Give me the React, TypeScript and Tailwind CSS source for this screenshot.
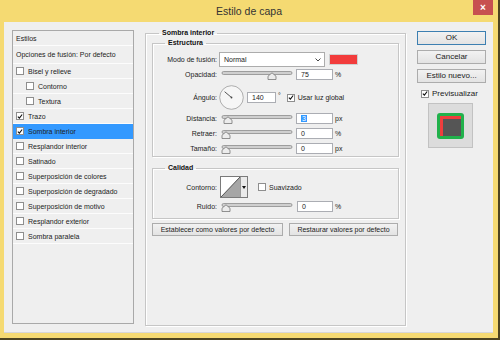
import React from 'react';

const Check = () => (
  <svg width="7" height="7" viewBox="0 0 7 7" className="block">
    <path d="M1 3.6 L2.8 5.4 L6 1.2" fill="none" stroke="#111" strokeWidth="1.3" />
  </svg>
);

const Checkbox: React.FC<{ checked?: boolean }> = ({ checked }) => (
  <span className="flex items-center justify-center w-[8px] h-[8px] shrink-0 bg-white border border-[#8e8e8e]">
    {checked && <Check />}
  </span>
);

const Slider: React.FC<{ pos: number }> = ({ pos }) => (
  <svg width="72" height="10" viewBox="0 0 72 10" className="block shrink-0">
    <rect x="1" y="1.5" width="70" height="3" rx="1.5" fill="#cfcfcf" stroke="#8c8c8c" strokeWidth="0.8" />
    <path
      d={`M${pos - 4} 9.5 L${pos - 4} 6.2 L${pos} 2.8 L${pos + 4} 6.2 L${pos + 4} 9.5 Z`}
      fill="#ececec"
      stroke="#777"
      strokeWidth="0.8"
    />
  </svg>
);

const NumInput: React.FC<{ value: string; w?: string; selected?: boolean }> = ({ value, w = 'w-[37px]', selected }) => (
  <div className={`${w} h-[11px] shrink-0 bg-white border border-[#abadb3] flex items-center pl-[4px] text-[7px] leading-none`}>
    {selected ? <span className="bg-[#3399ff] text-white px-[1px]">{value}</span> : value}
  </div>
);

const Label: React.FC<{ children: React.ReactNode }> = ({ children }) => (
  <span className="w-[64px] shrink-0 text-right text-[7px] leading-none text-[#222]">{children}</span>
);

const SliderRow: React.FC<{ label: string; pos: number; value: string; unit: string; selected?: boolean; top: string }> = ({
  label,
  pos,
  value,
  unit,
  selected,
  top,
}) => (
  <div className={`flex items-center h-[11px] ${top}`}>
    <Label>{label}</Label>
    <div className="ml-[4px]">
      <Slider pos={pos} />
    </div>
    <div className="ml-[3px]">
      <NumInput value={value} selected={selected} />
    </div>
    <span className="ml-[2px] text-[7px] leading-none">{unit}</span>
  </div>
);

const Button: React.FC<{ children: React.ReactNode; className?: string; primary?: boolean }> = ({ children, className = '', primary }) => (
  <div
    className={`flex items-center justify-center h-[13px] bg-gradient-to-b from-[#f2f2f2] to-[#e3e3e3] border ${
      primary ? 'border-[#3c7fb1]' : 'border-[#acacac]'
    } text-[#222] leading-none ${className}`}
  >
    {children}
  </div>
);

const styles = [
  { name: 'Bisel y relieve' },
  { name: 'Contorno', indent: true },
  { name: 'Textura', indent: true },
  { name: 'Trazo', checked: true },
  { name: 'Sombra interior', checked: true, active: true },
  { name: 'Resplandor interior' },
  { name: 'Satinado' },
  { name: 'Superposición de colores' },
  { name: 'Superposición de degradado' },
  { name: 'Superposición de motivo' },
  { name: 'Resplandor exterior' },
  { name: 'Sombra paralela' },
];

const Fieldset: React.FC<{ legend: string; className?: string; legendClass?: string; children: React.ReactNode }> = ({
  legend,
  className = '',
  legendClass = 'ml-[12px]',
  children,
}) => (
  <fieldset className={`border border-[#c6c6c6] shadow-[inset_1px_1px_0_#fff,1px_1px_0_#fff] ${className}`}>
    <legend className={`${legendClass} px-[3px] text-[7px] leading-[8px] font-bold text-[#111]`}>{legend}</legend>
    {children}
  </fieldset>
);

export default function App() {
  return (
    <div className="w-[500px] h-[340px] bg-[#f5da72] border-r-2 border-b-2 border-[#4d4420] flex flex-col font-['Liberation_Sans',Arial,sans-serif] text-[#222] relative">
      {/* title bar */}
      <div className="h-[22px] shrink-0 flex items-center justify-center">
        <span className="text-[10.5px] text-[#333] mt-[1px]">Estilo de capa</span>
      </div>
      <div className="absolute top-0 right-[5px] w-[20px] h-[15px] bg-[#c75050] flex items-center justify-center text-white text-[10px] font-bold leading-none">
        ×
      </div>

      {/* client */}
      <div className="ml-[4px] mr-[5px] h-[311px] bg-[#efefef] border-b border-[#d7d7d7] flex">
        {/* styles list */}
        <div className="ml-[8px] mt-[8px] w-[122px] h-[294px] border border-[#a9a9a9] bg-[#efefef] flex flex-col text-[7px] leading-none">
          <div className="h-[15px] border-b border-[#fcfcfc] flex items-center pl-[3px]">Estilos</div>
          <div className="h-[18px] border-b border-[#fcfcfc] flex items-center pl-[3px]">Opciones de fusión: Por defecto</div>
          {styles.map((s) => (
            <div
              key={s.name}
              className={`h-[15px] shrink-0 flex items-center border-b ${
                s.active ? 'bg-[#3399ff] border-[#3399ff]' : 'border-[#fcfcfc]'
              } ${s.indent ? 'pl-[13px]' : 'pl-[3px]'}`}
            >
              <Checkbox checked={s.checked} />
              <span className="ml-[4px]">{s.name}</span>
            </div>
          ))}
        </div>

        {/* settings */}
        <div className="ml-[11px] mt-[7px] w-[261px] flex flex-col">
          <Fieldset legend="Sombra interior" legendClass="ml-[7px]" className="h-[297px] px-[6px]">
            <Fieldset legend="Estructura" className="mt-[2px] pb-[2px]">
              <div className="flex items-center h-[15px] mt-[5px]">
                <Label>Modo de fusión:</Label>
                <div className="ml-[2px] w-[106px] h-[15px] bg-white border border-[#acacac] flex items-center justify-between pl-[4px] pr-[3px] text-[7px] leading-none">
                  <span>Normal</span>
                  <svg width="6" height="4" viewBox="0 0 6 4">
                    <path d="M0.5 0.5 L3 3 L5.5 0.5" fill="none" stroke="#333" strokeWidth="0.9" />
                  </svg>
                </div>
                <div className="ml-[4px] w-[29px] h-[11px] bg-[#f23c3c] border border-[#d0d0d0]" />
              </div>
              <SliderRow label="Opacidad:" pos={51} value="75" unit="%" top="mt-[2px]" />
              <div className="flex items-center h-[25px] mt-[5px]">
                <Label>Ángulo:</Label>
                <svg width="25" height="25" viewBox="0 0 25 25" className="ml-[2px] shrink-0">
                  <circle cx="12.5" cy="12.5" r="11.8" fill="#f6f6f6" stroke="#9c9c9c" strokeWidth="0.8" />
                  <line x1="12.5" y1="12.5" x2="5.6" y2="6.7" stroke="#444" strokeWidth="0.9" />
                  <circle cx="12.5" cy="12.5" r="0.9" fill="#444" />
                </svg>
                <div className="ml-[3px]">
                  <NumInput value="140" w="w-[29px]" />
                </div>
                <span className="ml-[2px] text-[7px] leading-none self-start mt-[7px]">°</span>
                <span className="ml-[6px]">
                  <Checkbox checked />
                </span>
                <span className="ml-[3px] text-[7px] leading-none">Usar luz global</span>
              </div>
              <SliderRow label="Distancia:" pos={7} value="3" unit="px" selected top="mt-[3px]" />
              <SliderRow label="Retraer:" pos={5} value="0" unit="%" top="mt-[4px]" />
              <SliderRow label="Tamaño:" pos={5} value="0" unit="px" top="mt-[4px]" />
            </Fieldset>

            <Fieldset legend="Calidad" className="mt-[7px] pb-[6px]">
              <div className="flex items-center h-[22px] mt-[4px]">
                <Label>Contorno:</Label>
                <div className="ml-[3px] w-[28px] h-[22px] flex border border-[#7a7a7a] bg-white">
                  <svg width="19" height="20" viewBox="0 0 19 20" className="block">
                    <rect width="19" height="20" fill="#fff" />
                    <path d="M0 20 L19 0 L19 20 Z" fill="#a6a6a6" />
                    <path d="M0 20 L19 0" stroke="#333" strokeWidth="0.8" />
                  </svg>
                  <div className="flex-1 border-l border-[#9a9a9a] bg-[#eaeaea] flex items-center justify-center">
                    <svg width="4" height="3" viewBox="0 0 4 3">
                      <path d="M0 0 L4 0 L2 3 Z" fill="#111" />
                    </svg>
                  </div>
                </div>
                <span className="ml-[10px]">
                  <Checkbox />
                </span>
                <span className="ml-[3px] text-[7px] leading-none">Suavizado</span>
              </div>
              <div className="flex items-center h-[11px] mt-[3px]">
                <Label>Ruido:</Label>
                <div className="ml-[4px]">
                  <Slider pos={5} />
                </div>
                <div className="ml-[4px]">
                  <NumInput value="0" w="w-[36px]" />
                </div>
                <span className="ml-[2px] text-[7px] leading-none">%</span>
              </div>
            </Fieldset>

            <div className="flex mt-[4px] gap-[6px] text-[7px]">
              <Button className="w-[131px]">Establecer como valores por defecto</Button>
              <Button className="w-[109px]">Restaurar valores por defecto</Button>
            </div>
          </Fieldset>
        </div>

        {/* right buttons */}
        <div className="ml-[11px] mt-[9px] w-[69px] flex flex-col text-[8px]">
          <Button primary className="h-[14px]">OK</Button>
          <Button className="mt-[5px] h-[14px]">Cancelar</Button>
          <Button className="mt-[5px] h-[14px]">Estilo nuevo...</Button>
          <div className="mt-[6px] h-[9px] flex items-center pl-[4px]">
            <Checkbox checked />
            <span className="ml-[3px] leading-none">Previsualizar</span>
          </div>
          <div className="mt-[5px] ml-[11px] w-[45px] h-[45px] bg-[#dcdcdc] border border-[#c2c2c2] flex items-center justify-center">
            <div className="w-[27px] h-[26px] rounded-[3px] bg-[#21b14b] p-[3px]">
              <div className="w-full h-full bg-[#ef3d3d] pl-[3px] pt-[3px]">
                <div className="w-full h-full bg-[#555555]" />
              </div>
            </div>
          </div>
        </div>
      </div>
    </div>
  );
}
